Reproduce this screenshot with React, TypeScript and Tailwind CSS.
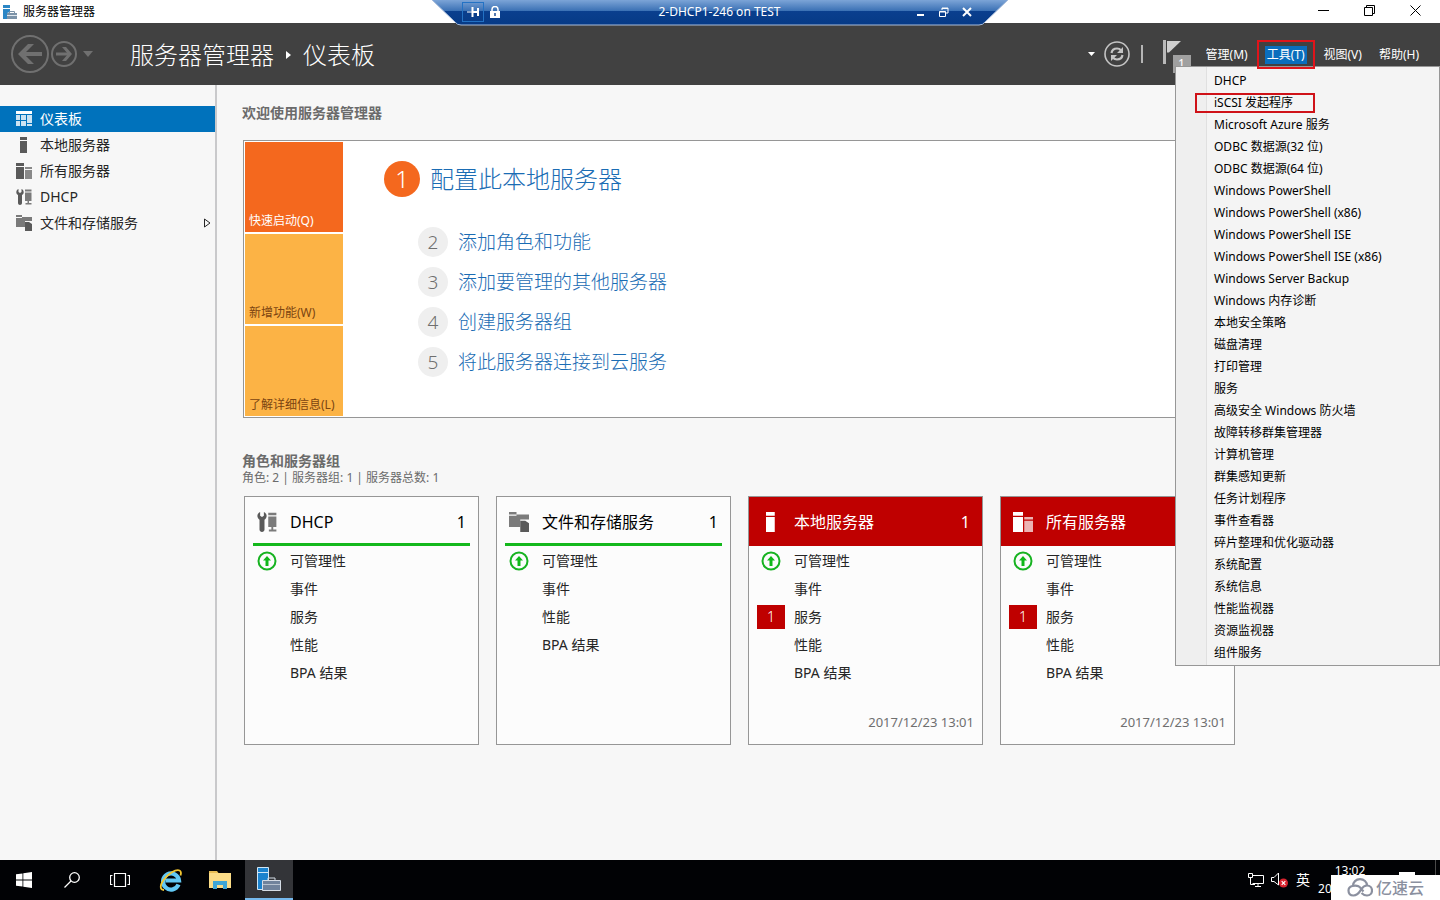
import type { ReactNode } from "react";

type IconName = "dashboard" | "server" | "servers" | "tools" | "files";

const navItems: { label: string; icon: IconName; expandable?: boolean }[] = [
    { label: "仪表板", icon: "dashboard" },
    { label: "本地服务器", icon: "server" },
    { label: "所有服务器", icon: "servers" },
    { label: "DHCP", icon: "tools" },
    { label: "文件和存储服务", icon: "files", expandable: true },
];

const toolItems = [
    "DHCP",
    "iSCSI 发起程序",
    "Microsoft Azure 服务",
    "ODBC 数据源(32 位)",
    "ODBC 数据源(64 位)",
    "Windows PowerShell",
    "Windows PowerShell (x86)",
    "Windows PowerShell ISE",
    "Windows PowerShell ISE (x86)",
    "Windows Server Backup",
    "Windows 内存诊断",
    "本地安全策略",
    "磁盘清理",
    "打印管理",
    "服务",
    "高级安全 Windows 防火墙",
    "故障转移群集管理器",
    "计算机管理",
    "群集感知更新",
    "任务计划程序",
    "事件查看器",
    "碎片整理和优化驱动器",
    "系统配置",
    "系统信息",
    "性能监视器",
    "资源监视器",
    "组件服务",
];

const steps = ["添加角色和功能", "添加要管理的其他服务器", "创建服务器组", "将此服务器连接到云服务"];

const allRows = ["可管理性", "事件", "服务", "性能", "BPA 结果"];

const cards: { title: string; icon: IconName; rows: string[]; count?: number; alert?: boolean }[] = [
    { title: "DHCP", icon: "tools", rows: allRows, count: 1 },
    { title: "文件和存储服务", icon: "files", rows: ["可管理性", "事件", "性能", "BPA 结果"], count: 1 },
    { title: "本地服务器", icon: "server", rows: allRows, count: 1, alert: true },
    { title: "所有服务器", icon: "servers", rows: allRows, alert: true },
];

function ServerIcon({ name, className }: { name: IconName; className: string }) {
    return (
        <svg viewBox="0 0 16 16" fill="currentColor" className={className} aria-hidden="true">
            {name === "dashboard" && (
                <>
                    <path d="M0 0h16v3H0z" />
                    <path opacity=".8" d="M0 4h4v5H0zM5 4h5v5H5zM11 4h5v8h-5zM0 10h4v5H0zM5 10h5v5H5zM11 13h5v2h-5z" />
                </>
            )}
            {name === "server" && <path d="M4 0h7v3H4zM4 4h7v12H4z" />}
            {name === "servers" && (
                <>
                    <path d="M0 0h8v3H0zM0 4h8v12H0z" />
                    <path opacity=".7" d="M9 4h7v2H9zM9 7h7v9H9z" />
                </>
            )}
            {name === "tools" && (
                <>
                    <path d="M2.500 0v3l1.500 1 1.500-1V0C7 .6 7.700 1.900 7.700 3.200c0 1.200-.6 2.300-1.700 2.900V14c0 1.100-.9 2-2 2s-2-.9-2-2V6.100C1 5.500.3 4.400.3 3.200.3 1.900 1 .6 2.500 0z" />
                    <path opacity=".8" d="M9 .5h6.500v2H9zM9 3.500h6.500V12H9zM11.500 12H13v2h-1.500zM9.500 14h6v1.500h-6z" />
                </>
            )}
            {name === "files" && (
                <>
                    <path opacity=".8" d="M0 0h6v2H0zM0 3h6V2h10v4H9v6H0z" />
                    <path d="M9 7h4l3 2v7H9z" />
                </>
            )}
        </svg>
    );
}

function SessionBar() {
    return (
        <div className="absolute top-0 left-1/2 z-30 h-[26px] w-[578px] -translate-x-1/2 text-white">
            <svg viewBox="0 0 578 26" className="absolute inset-0 h-full w-full" aria-hidden="true">
                <defs>
                    <linearGradient id="session" x1="0" y1="0" x2="0" y2="1">
                        <stop offset="0" stopColor="#82a9da" />
                        <stop offset=".46" stopColor="#3a70b4" />
                        <stop offset=".47" stopColor="#0a3f8e" />
                        <stop offset="1" stopColor="#063a86" />
                    </linearGradient>
                </defs>
                <path d="M0-1 24 22q2 3 6 3h518q4 0 6-3L578-1z" fill="url(#session)" stroke="#a9bddb" />
            </svg>
            <div className="relative grid h-6 grid-cols-3 items-center pr-8 pl-[31px]">
                <div className="flex items-center gap-[3px]">
                    <button aria-label="固定" className="flex h-5 w-[22px] items-center justify-center border border-[#2372c4]">
                        <svg viewBox="0 0 12 10" className="h-2.5 w-3" fill="none" stroke="currentColor">
                            <path d="M0 5h5" />
                            <path d="M5.500 0v10M6 5h5M11 1v8" strokeWidth="2" />
                        </svg>
                    </button>
                    <button aria-label="安全" className="flex w-4 justify-center">
                        <svg viewBox="0 0 10 12" className="h-3 w-2.5">
                            <path d="M2 6V3.500a3 3 0 0 1 6 0V6" fill="none" stroke="currentColor" strokeWidth="1.500" />
                            <path d="M0 5h10v7H0z" fill="currentColor" />
                            <path d="M4.300 7h1.400v3H4.300z" fill="#0a3f8e" />
                        </svg>
                    </button>
                </div>
                <span className="text-center text-xs whitespace-nowrap">2-DHCP1-246 on TEST</span>
                <div className="flex items-center justify-end gap-[3px]">
                    <button aria-label="最小化" className="flex h-5 w-5 items-center justify-center">
                        <svg viewBox="0 0 10 10" className="h-2.5 w-2.5" fill="currentColor">
                            <path d="M1 7h7v2H1z" />
                        </svg>
                    </button>
                    <button aria-label="还原" className="flex h-5 w-5 items-center justify-center">
                        <svg viewBox="0 0 10 10" className="h-2.5 w-2.5" fill="none" stroke="currentColor">
                            <path d="M3 3V1h6v5H7M3 1.500h6M.5 4.500h6v5h-6zM.5 5h6" />
                        </svg>
                    </button>
                    <button aria-label="断开" className="flex h-5 w-5 items-center justify-center">
                        <svg viewBox="0 0 10 10" className="h-2.5 w-2.5" stroke="currentColor" strokeWidth="2">
                            <path d="m1 1 8 8M9 1 1 9" />
                        </svg>
                    </button>
                </div>
            </div>
        </div>
    );
}

function WindowButton({ label, children }: { label: string; children: ReactNode }) {
    return (
        <button aria-label={label} className="flex w-[46px] items-center justify-center">
            <svg viewBox="0 0 11 11" className="h-[11px] w-[11px]" fill="none" stroke="black">
                {children}
            </svg>
        </button>
    );
}

function TitleBar() {
    return (
        <div className="flex h-[23px] bg-white">
            <div className="flex flex-1 items-center gap-1 pl-[3px]">
                <svg viewBox="0 0 14 14" className="h-3.5 w-3.5" aria-hidden="true">
                    <path d="M0 0h7v3H0zM0 4h7v3L4 8v6H0z" fill="#2b86c5" />
                    <path d="M6.500 8V6.500h5V8" fill="none" stroke="#7c93a8" />
                    <path d="M4 8h10v6H4z" fill="#7c93a8" />
                    <path d="M4 10.500h10" stroke="#dfe7ee" />
                </svg>
                <h1 className="ml-[2px] text-xs text-black">服务器管理器</h1>
            </div>
            <div className="flex h-[21px] pr-0.5">
                <WindowButton label="最小化">
                    <path d="M0 5.500h11" />
                </WindowButton>
                <WindowButton label="还原">
                    <path d="M.5 2.500h8v8h-8zM2.500 2.500v-2h8v8h-2" />
                </WindowButton>
                <WindowButton label="关闭">
                    <path d="m.5.5 10 10M10.500.5l-10 10" />
                </WindowButton>
            </div>
        </div>
    );
}

function ToolsMenu() {
    return (
        <ul className="absolute top-[43px] right-0 z-10 w-[265px] border border-[#979797] bg-[#f3f3f3] bg-[linear-gradient(to_right,#efefef_30px,#e0e0e0_30px,#e0e0e0_31px,#f4f4f4_31px)] pt-[3px] pb-px text-black">
            {toolItems.map((item) => (
                <li key={item} className="relative">
                    <button className="block w-full pl-[38px] text-left text-xs leading-[22px]">{item}</button>
                    {item.startsWith("iSCSI") && (
                        <span className="pointer-events-none absolute inset-y-px left-[19px] w-[120px] border-2 border-[#cf1218]" />
                    )}
                </li>
            ))}
        </ul>
    );
}

function Header() {
    return (
        <header className="relative flex h-[62px] items-center bg-[#414141] pr-[21px] pl-[11px] text-white">
            <div className="flex items-center text-[#707070]">
                <button aria-label="后退">
                    <svg viewBox="0 0 38 38" className="h-[38px] w-[38px]" fill="none" stroke="currentColor">
                        <circle cx="19" cy="19" r="18" strokeWidth="2" />
                        <path d="M31 19H10" strokeWidth="4" />
                        <path d="M17 9h6L13 19l10 10h-6L7 19z" fill="currentColor" stroke="none" />
                    </svg>
                </button>
                <button aria-label="前进" className="ml-0.5">
                    <svg viewBox="0 0 26 26" className="h-[26px] w-[26px]" fill="none" stroke="currentColor">
                        <circle cx="13" cy="13" r="12" strokeWidth="2" />
                        <path d="M5 13h13" strokeWidth="3" />
                        <path d="M15 6h-4l6 7-6 7h4l6-7z" fill="currentColor" stroke="none" />
                    </svg>
                </button>
                <button aria-label="历史记录" className="ml-1.5">
                    <svg viewBox="0 0 10 6" className="h-1.5 w-2.5" fill="currentColor">
                        <path d="M0 0h10L5 6z" />
                    </svg>
                </button>
            </div>
            <div className="ml-[37px] flex flex-1 items-center pt-0.5 text-2xl font-light">
                <span>服务器管理器</span>
                <svg viewBox="0 0 5 8" className="mx-3 h-2 w-[5px]" fill="currentColor" aria-hidden="true">
                    <path d="M0 0l5 4-5 4z" />
                </svg>
                <span>仪表板</span>
            </div>
            <div className="flex items-center">
                <button aria-label="更多">
                    <svg viewBox="0 0 7 4" className="h-1 w-[7px]" fill="currentColor">
                        <path d="M0 0h7L3.500 4z" />
                    </svg>
                </button>
                <button aria-label="刷新" className="ml-[9px] text-[#c4c4c4]">
                    <svg viewBox="0 0 26 26" className="h-[26px] w-[26px]" fill="none" stroke="currentColor">
                        <circle cx="13" cy="13" r="12" strokeWidth="1.600" />
                        <path d="M7.500 12c.5-3 2.500-4.500 5.500-4.500 1.800 0 3 .6 4 1.700M18.500 14c-.5 3-2.500 4.500-5.500 4.500-1.800 0-3-.6-4-1.700" strokeWidth="2.200" />
                        <path d="M19 6v6h-6zM7 20v-6h6z" fill="currentColor" stroke="none" />
                    </svg>
                </button>
                <span className="ml-[11px] h-[18px] w-0.5 bg-[#b5b5b5]" />
                <button aria-label="通知" className="relative ml-5 text-[#cfcfcf]">
                    <svg viewBox="0 0 28 28" className="h-7 w-7" fill="currentColor">
                        <path d="M0 0h3v24H0z" fill="#b9b9b9" />
                        <path d="M4 1h14L6 12.500H4z" />
                    </svg>
                    <span className="absolute top-[15px] left-2.5 h-[18px] w-[18px] bg-[#a0a0a0] text-center text-xs leading-[18px] text-white">
                        1
                    </span>
                </button>
                <nav className="ml-[15px] flex items-center gap-[17px] pt-0.5 text-xs">
                    <button>管理(M)</button>
                    <div className="relative z-20 flex">
                        <button className="bg-[#0a6ebd] px-0.5 leading-[18px]" aria-expanded="true">
                            工具(T)
                        </button>
                        <span className="pointer-events-none absolute -inset-x-2 -top-1.5 -bottom-[5px] border-2 border-[#e0141a]" />
                    </div>
                    <button>视图(V)</button>
                    <button>帮助(H)</button>
                </nav>
            </div>
            <ToolsMenu />
        </header>
    );
}

function Sidebar() {
    return (
        <nav className="w-[217px] shrink-0 border-r-2 border-[#c9c9cb] pt-[21px]">
            {navItems.map((item, i) => (
                <a
                    key={item.label}
                    href="#"
                    className={`flex h-[26px] items-center gap-2 px-4 text-sm ${i === 0 ? "bg-[#0072bc] text-white" : "text-[#262626]"}`}
                >
                    <ServerIcon name={item.icon} className={`h-4 w-4 ${i === 0 ? "text-white" : "text-[#5a5a5a]"}`} />
                    <span className="flex-1">{item.label}</span>
                    {item.expandable && (
                        <svg viewBox="0 0 7 10" className="-mr-3 h-2.5 w-[7px]" fill="none" stroke="currentColor" aria-hidden="true">
                            <path d="M.5 1v8L6 5z" />
                        </svg>
                    )}
                </a>
            ))}
        </nav>
    );
}

function WelcomePanel() {
    return (
        <section>
            <h2 className="text-sm leading-[18px] font-bold text-[#6b6b6b]">欢迎使用服务器管理器</h2>
            <div className="mt-[18px] ml-px flex border border-[#969696] bg-white p-px">
                <div className="flex w-[98px] flex-col gap-0.5 text-xs text-[#7a4411]">
                    <button className="flex h-[90px] items-end bg-[#f4681e] px-1 pb-[3px] text-white">快速启动(Q)</button>
                    <button className="flex h-[90px] items-end bg-[#fcb345] px-1 pb-[3px]">新增功能(W)</button>
                    <button className="flex h-[90px] items-end bg-[#fcb345] px-1 pb-[3px]">了解详细信息(L)</button>
                </div>
                <div className="ml-[41px] pt-[19px] font-light text-[#1a6cb4]">
                    <a href="#" className="flex items-center gap-2.5 text-2xl leading-9">
                        <span className="h-9 w-9 rounded-full bg-[#f4681e] text-center text-white">1</span>
                        配置此本地服务器
                    </a>
                    <ol className="mt-[30px] ml-[34px] flex flex-col gap-2.5">
                        {steps.map((step, i) => (
                            <li key={step}>
                                <a href="#" className="flex items-center gap-2.5 text-[19px] leading-[30px]">
                                    <span className="h-[30px] w-[30px] rounded-full bg-[#efefef] text-center text-[#6f6f6f]">{i + 2}</span>
                                    {step}
                                </a>
                            </li>
                        ))}
                    </ol>
                </div>
            </div>
        </section>
    );
}

function RoleCard({ title, icon, rows, count, alert }: (typeof cards)[number]) {
    return (
        <article className="flex min-h-[249px] w-[235px] flex-col border border-[#969696] bg-[#fcfcfc]">
            <div className={`relative flex h-[49px] items-center gap-[9px] pr-3 pl-2 text-base ${alert ? "bg-[#bf0000] text-white" : "text-black"}`}>
                <span className="flex w-7 justify-center">
                    <ServerIcon name={icon} className={`h-5 w-5 ${alert ? "text-white" : "text-[#5a5a5a]"}`} />
                </span>
                <h3 className="flex-1">{title}</h3>
                {count && <span>{count}</span>}
                {!alert && <span className="absolute inset-x-2 bottom-0 h-[3px] bg-[#14b81c]" />}
            </div>
            <ul className="pt-px text-sm text-[#262626]">
                {rows.map((row) => (
                    <li key={row} className="flex h-7 items-center gap-[9px] pl-2">
                        <span className="flex w-7 justify-center">
                            {row === "可管理性" && (
                                <svg viewBox="0 0 20 20" className="h-5 w-5" aria-hidden="true">
                                    <circle cx="10" cy="10" r="8.500" fill="none" stroke="#17b321" strokeWidth="2" />
                                    <path d="m10 5 4 4.500h-2.500V15h-3V9.500H6z" fill="#10b81a" />
                                </svg>
                            )}
                            {row === "服务" && alert && (
                                <span className="h-6 w-7 bg-[#bf0000] text-center leading-6 font-light text-white">1</span>
                            )}
                        </span>
                        <a href="#">{row}</a>
                    </li>
                ))}
            </ul>
            {alert && <time className="mt-auto pr-2 pb-3 text-right text-[13px] leading-5 text-[#6f6f6f]">2017/12/23 13:01</time>}
        </article>
    );
}

function TaskButton({ label, active, children }: { label: string; active?: boolean; children: ReactNode }) {
    return (
        <button
            aria-label={label}
            className={`flex h-10 w-12 items-center justify-center ${active ? "border-b-2 border-[#76b9ed] bg-[#333438]" : ""}`}
        >
            {children}
        </button>
    );
}

function Taskbar() {
    return (
        <footer className="relative flex h-10 items-center bg-[#010205] text-white">
            <TaskButton label="开始">
                <svg viewBox="0 0 16 16" className="h-4 w-4" fill="currentColor">
                    <path d="M0 2.300 6.500 1.400v6.200H0zM7.300 1.300 16 0v7.600H7.300zM0 8.400h6.500v6.200L0 13.700zM7.300 8.400H16V16l-8.700-1.300z" />
                </svg>
            </TaskButton>
            <TaskButton label="搜索">
                <svg viewBox="0 0 16 16" className="h-4 w-4" fill="none" stroke="currentColor" strokeWidth="1.300">
                    <circle cx="10.500" cy="5.500" r="4.800" />
                    <path d="M7 9 .5 15.500" />
                </svg>
            </TaskButton>
            <TaskButton label="任务视图">
                <svg viewBox="0 0 20 14" className="h-3.5 w-5" fill="none" stroke="currentColor" strokeWidth="1.200">
                    <path d="M4.500.5h11v13h-11zM2.500 2.500h-2v9h2M17.500 2.500h2v9h-2" />
                </svg>
            </TaskButton>
            <div className="ml-[3px] flex gap-px">
                <TaskButton label="Internet Explorer">
                    <svg viewBox="0 0 24 24" className="h-6 w-6" fill="none">
                        <path d="M19.500 16.500A8 8 0 1 1 20 12.500H6.500" stroke="#62c8f4" strokeWidth="4.200" />
                        <path d="M5 22C1 22 .5 18 4.500 12 9 5.500 17 1 20.500 2.500c1.700.8 1.800 2.500 1 5" stroke="#f3c631" strokeWidth="1.800" />
                    </svg>
                </TaskButton>
                <TaskButton label="文件资源管理器">
                    <svg viewBox="0 0 22 18" className="h-[18px] w-[22px]">
                        <path d="M0 0h8l1.500 2H22v15H0z" fill="#e8bd54" />
                        <path d="M0 2h22v15H0z" fill="#fbdc87" />
                        <path d="M4 10h14v8h-4v-4H8v4H4z" fill="#3ea6d6" />
                    </svg>
                </TaskButton>
                <TaskButton label="服务器管理器" active>
                    <svg viewBox="0 0 24 24" className="h-6 w-6">
                        <path d="M.5.5h11v22H.5z" fill="#1c83ce" stroke="#cfe6f7" />
                        <path d="M.5 5.500h11" stroke="#cfe6f7" />
                        <path d="M11 13v-2h7v2" fill="none" stroke="#d5dce5" />
                        <path d="M5.500 13.500h18v10h-18z" fill="#70839c" stroke="#d5dce5" />
                        <path d="M6 17.500h17" stroke="#b7c2cf" />
                    </svg>
                </TaskButton>
            </div>
            <div className="ml-auto flex h-full items-center">
                <svg viewBox="0 0 18 14" className="h-3.5 w-[18px]" fill="none" stroke="currentColor" aria-hidden="true">
                    <path d="M5.500 2.500h11v8h-11M8 13.500h6M11 11v2M1.500.5h4v4h-4zM3.500 5v6.500H8" />
                </svg>
                <svg viewBox="0 0 18 16" className="ml-1.5 h-4 w-[18px]" fill="none" stroke="currentColor" aria-hidden="true">
                    <path d="M.5 5.500H3L7.500 1v12L3 9.500H.5z" />
                    <circle cx="12.500" cy="11" r="4.500" fill="#d8232e" stroke="none" />
                    <path d="m10.700 9.200 3.600 3.600M14.300 9.200l-3.600 3.600" strokeWidth="1.200" />
                </svg>
                <span className="ml-[7px] text-sm">英</span>
                <div className="ml-[7px] flex h-full w-[66px] flex-col items-center pt-0.5 text-xs leading-[18px]">
                    <span>13:02</span>
                    <span>2017/12/23</span>
                </div>
                <span className="mt-3 mr-5 ml-4 h-5 w-4 self-start bg-white" />
                <span className="mr-1 h-full w-px bg-[#4a4a4a]" />
            </div>
            <div className="absolute right-0 bottom-0 flex h-[25px] w-[109px] items-center justify-center gap-[3px] bg-white text-base font-medium text-[#8b909f]">
                <svg viewBox="0 0 26 19" className="h-[19px] w-[26px]" fill="none" stroke="currentColor" strokeWidth="2.200" aria-hidden="true">
                    <path d="M6 8C6 4 9 1.200 13 1.200S20 4 20 7.500" />
                    <path d="M16.500 13.500c-1.500-1.500-3-4.500-5-5.300C8.500 7 1.500 7.500 1.500 12.500c0 3 2 5 5 5 5 0 6-4 8-6.500 1.500-2.300 3.500-3.500 5.500-3.500 3 0 5 2.200 5 5s-2 5-5 5c-2.500 0-4-1-5.500-2.500" />
                </svg>
                亿速云
            </div>
        </footer>
    );
}

export default function App() {
    return (
        <div className="relative flex min-h-screen flex-col bg-[#f7f7f7] font-['Noto_Sans','Noto_Sans_CJK_SC',sans-serif]">
            <SessionBar />
            <TitleBar />
            <Header />
            <div className="flex flex-1">
                <Sidebar />
                <main className="flex-1 pt-[19px] pr-5 pb-8 pl-[25px]">
                    <WelcomePanel />
                    <section className="mt-[34px] text-[#6b6b6b]">
                        <h2 className="text-sm leading-[18px] font-bold">角色和服务器组</h2>
                        <p className="text-xs leading-4">角色: 2 | 服务器组: 1 | 服务器总数: 1</p>
                        <div className="mt-2.5 ml-0.5 flex flex-wrap gap-[17px]">
                            {cards.map((card) => (
                                <RoleCard key={card.title} {...card} />
                            ))}
                        </div>
                    </section>
                </main>
            </div>
            <Taskbar />
        </div>
    );
}
